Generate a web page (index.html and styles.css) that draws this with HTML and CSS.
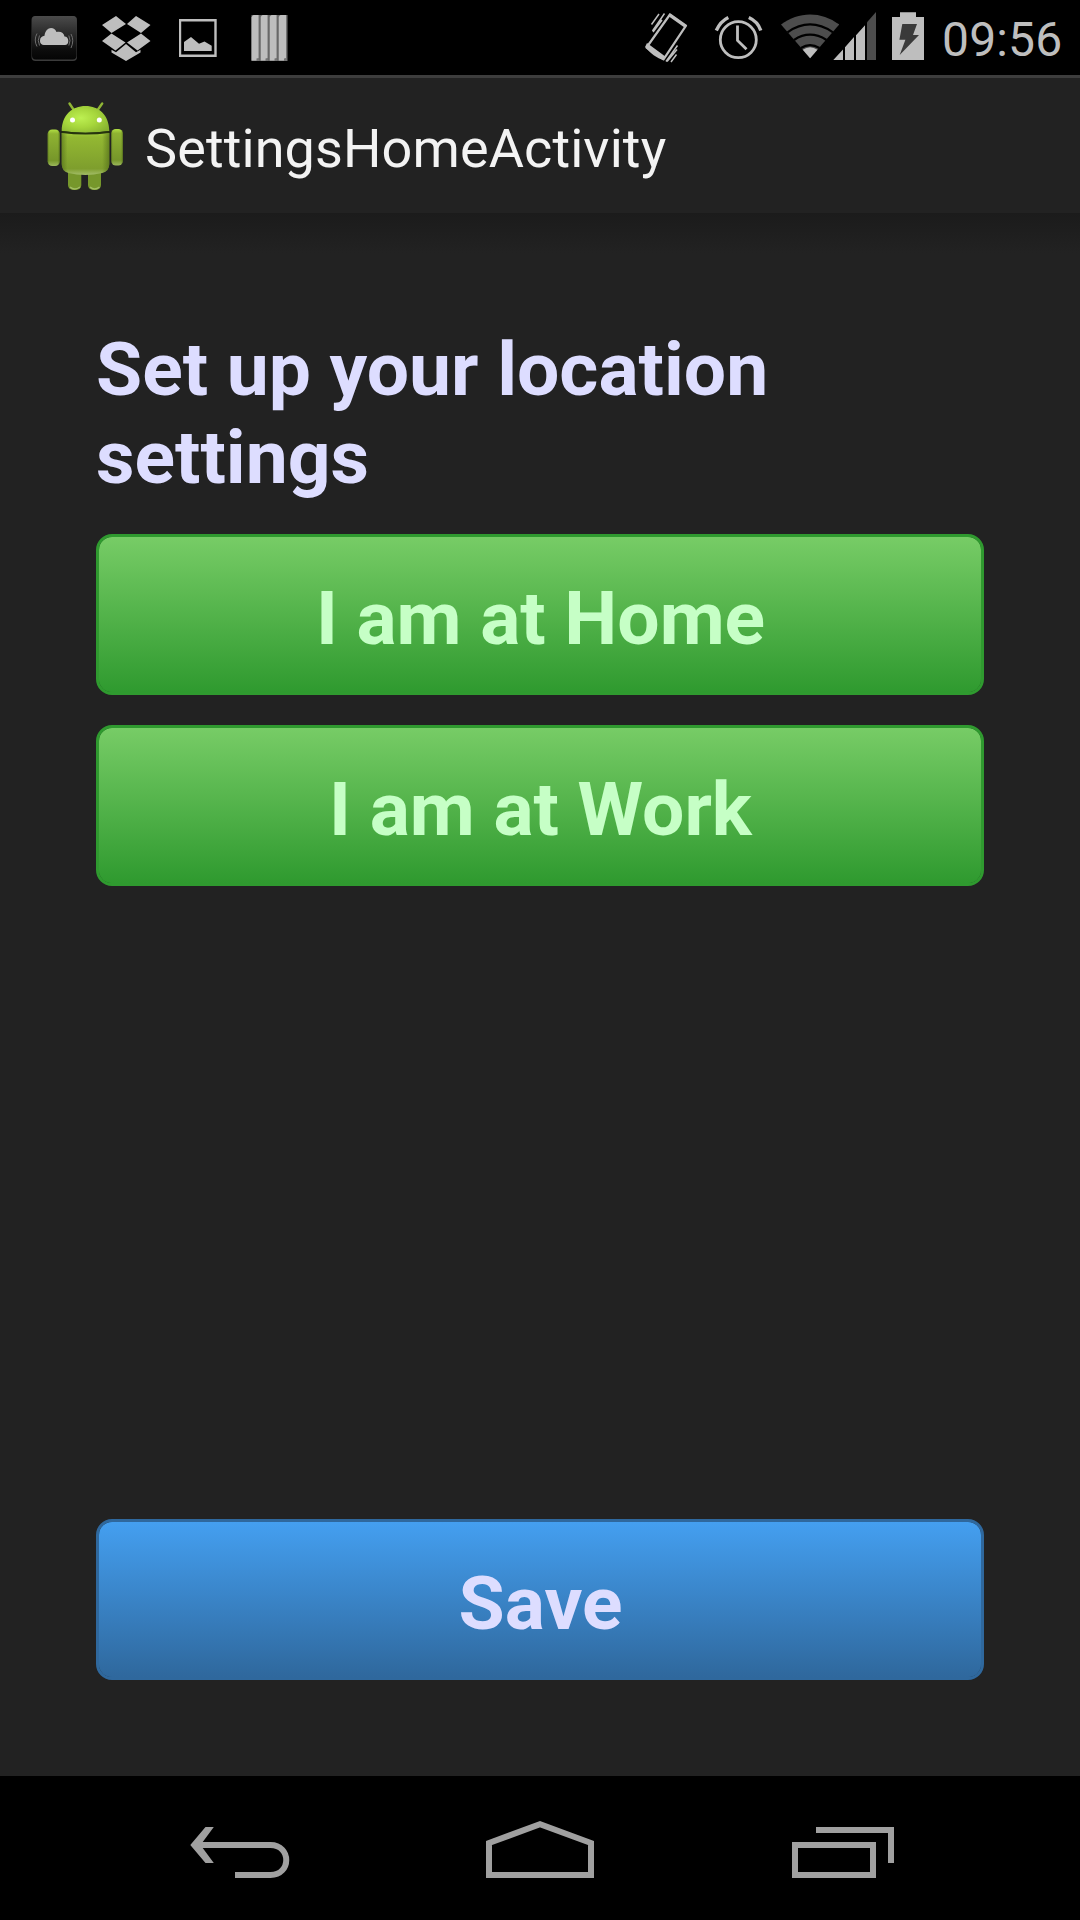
FILE: index.html
```html
<!DOCTYPE html>
<html lang="en">
<head>
<meta charset="utf-8">
<title>SettingsHomeActivity</title>
<link rel="stylesheet" href="styles.css">
</head>
<body>
<div class="screen">
  <div class="status-bar">
    <div class="notifications">
      <svg width="48" height="75" viewBox="30 0 48 75">
        <defs>
          <linearGradient id="tile" x1="0" y1="0" x2="0" y2="1"><stop offset="0" stop-color="#4b4b4b"/><stop offset=".5" stop-color="#222"/><stop offset=".8" stop-color="#0c0c0c"/><stop offset="1" stop-color="#050505"/></linearGradient>
        </defs>
        <rect x="31.5" y="16" width="45.5" height="45" rx="4" fill="#3b3b3b"/>
        <rect x="32" y="16" width="44.500" height="43.500" rx="4" fill="url(#tile)"/>
        <path d="M44 45a4 4 0 0 1-4-4.500c0-3 2-4.500 4.500-4.800C45 31 48 28 51 28c2.500 0 4.500 1.500 5.500 4 4-1.200 7.500.8 8 4.500 2.500 0 3.800 2 3.800 4.500 0 2.500-1.300 4-3.300 4z" fill="#bebebe"/>
        <g fill="none" stroke="#6e6e6e" stroke-width="1"><path d="M39.500 35.500q-2.500 5 0 10M37 33.500q-3.500 6.500 0 13M68.800 35.500q2.500 5 0 10M71 34q3.500 6.500 0 14"/></g>
      </svg>
      <svg width="50" height="75" viewBox="101 0 50 75" fill="#bebebe">
        <path d="M116 16l10 8-14.500 9-9.500-8zM136 16l14.500 9-9.500 8-14-9zM111.500 33.500l14 9-10 8L102 41zM141 33.500l9.500 7.500-13 9.500-10.500-8z"/>
        <path d="M126 44l10 8.200 4.500-2.500v2.800L126 61l-14.500-8.500v-2.800l4.500 2.500z"/>
      </svg>
      <svg width="38" height="75" viewBox="179 0 38 75">
        <path d="M180 20.200h35.500v35.600H180z" fill="none" stroke="#bebebe" stroke-width="2.400"/>
        <path d="M184 51v-9l7-5 8 6.800 5.500-2.300 7.200 4.200V51z" fill="#bebebe"/>
      </svg>
      <svg width="37" height="75" viewBox="251.500 0 37 75">
        <path d="M252 15h36v46h-36z" fill="#747474"/>
        <path d="M252 17l2-2h5v43l-2 .5v2h-5zM261 17l2-2h5v43l-2 .5v2h-5zM270 17l2-2h5v43l-2 .5v2h-5zM279 17l2-2h5.500v43l-2 .5v2H279z" fill="#bebebe"/>
        <path d="M260.500 15v46M269.500 15v46M278.500 15v46" stroke="#555" stroke-width=".8"/>
      </svg>
    </div>
    <div class="system-icons">
      <svg width="44" height="75" viewBox="644 0 44 75">
        <path d="M670 14.500l16 11.200-22.500 33.600-17-11.800z" fill="none" stroke="#bebebe" stroke-width="2.200" stroke-linejoin="round"/>
        <path d="M669.500 13.200l17 12.200-1.300 2.600-17-12zM647 43l18 13.300-1.500 3.700c-6-1.500-14-7-18.300-13.300z" fill="#bebebe"/>
        <path d="M659 14l-7.500 10.500M664.500 13.500l-12 17.500M677.500 45.500L666 61.500M677 49.500l-10 12M676.500 54.500l-5.500 7.500M662 20l-9 12" stroke="#bebebe" stroke-width="1.500"/>
      </svg>
      <svg class="alarm" width="50" height="75" viewBox="713 0 50 75" fill="none" stroke="#bebebe" stroke-width="2.800">
        <circle cx="738.300" cy="39.700" r="18"/>
        <path d="M737.500 25.500V40.500l9 8.700"/>
        <path d="M716.300 30.500q4-9 12-13M748.800 17.500q9 4 12 13" stroke-width="3.400"/>
      </svg>
      <svg class="wifi" width="58" height="75" viewBox="780.500 0 58 75">
        <path d="M780.500 24.500C798 11 821 11 838.700 24.500L809.600 58.300z" fill="#4d4d4d"/>
        <path d="M787 32.300c15-10.500 30-10.500 45.500 0M793.500 40c10.500-7 21.500-7 32.500 0M800.500 48c6-4 12-4 18.500 0" fill="none" stroke="#000" stroke-width="2.200"/>
        <path d="M802.300 49.800q7.300-5 14.600 0l-7.300 8.500z" fill="#bebebe"/>
      </svg>
      <svg width="43" height="75" viewBox="833 0 43 75">
        <path d="M833.300 60l9.700-10.500V60zM845 60V47.300l9-10.300v23zM856 60V35.200l9-10V60z" fill="#bebebe"/>
        <path d="M867 60V22.300l9-10.300v48z" fill="#4d4d4d"/>
      </svg>
      <svg class="battery" width="32" height="75" viewBox="892 0 32 75">
        <path d="M900 12.300h16v4.700h8v43h-32V17h8z" fill="#bebebe"/>
        <path d="M902.300 24h14.700l-4 11h6l-19.300 20 5.700-15.300h-6z" fill="#3a3a3a"/>
      </svg>
      <span class="clock">09:56</span>
    </div>
  </div>

  <header class="action-bar">
    <svg width="78" height="92" viewBox="46 100 78 92">
      <defs>
        <radialGradient id="head" cx=".4" cy=".45" r=".7"><stop offset="0" stop-color="#bdf052"/><stop offset=".5" stop-color="#a6d63c"/><stop offset="1" stop-color="#86b030"/></radialGradient>
        <linearGradient id="body" x1="0" y1="0" x2="0" y2="1"><stop offset="0" stop-color="#a2ce38"/><stop offset=".1" stop-color="#93b832"/><stop offset=".85" stop-color="#7e9e2d"/><stop offset="1" stop-color="#a3bd68"/></linearGradient>
        <linearGradient id="edge"><stop offset="0" stop-color="#506b18" stop-opacity=".6"/><stop offset=".12" stop-color="#506b18" stop-opacity="0"/><stop offset=".85" stop-color="#506b18" stop-opacity="0"/><stop offset="1" stop-color="#506b18" stop-opacity=".65"/></linearGradient>
        <linearGradient id="limb" x1="0" y1="0" x2="0" y2="1"><stop offset="0" stop-color="#b1df43"/><stop offset=".12" stop-color="#8fb332"/><stop offset=".85" stop-color="#76962a"/><stop offset="1" stop-color="#9cb85c"/></linearGradient>
      </defs>
      <path d="M69.500 103.500l4.300 6.500M102.200 103.500L98 109.500" stroke="#8fb535" stroke-width="2.400" stroke-linecap="round"/>
      <rect x="68" y="167" width="13.300" height="23" rx="5" fill="#76972b"/>
      <rect x="88" y="167" width="13" height="23" rx="5" fill="#76972b"/>
      <path d="M70 187q4.500 4 10 0M90 187q4.500 4 9.500 0" fill="none" stroke="#a2bd66" stroke-width="1.500"/>
      <path d="M61.700 131C62 115 72 106 85.500 106S109 115 109.300 131q-24 3.500-47.600 0z" fill="url(#head)"/>
      <path d="M61.700 131q23.800 3.500 47.600 0v2q-23.800 3-47.600 0z" fill="#26350c"/>
      <path d="M61.700 133q23.800 3 47.600 0v31q0 7-7 9-17 4-34 0-6.600-2-6.600-9z" fill="url(#body)"/>
      <path d="M61.700 133q23.800 3 47.600 0v31q0 7-7 9-17 4-34 0-6.600-2-6.600-9z" fill="url(#edge)"/>
      <rect x="47.700" y="129.500" width="12" height="36.500" rx="4.500" fill="url(#limb)"/><rect x="47.700" y="129.500" width="12" height="36.500" rx="4.500" fill="url(#edge)"/>
      <rect x="111.300" y="129" width="11.500" height="36.500" rx="4.500" fill="url(#limb)"/><rect x="111.300" y="129" width="11.500" height="36.500" rx="4.500" fill="url(#edge)"/>
      <circle cx="72.500" cy="120" r="2.500" fill="#fff"/><circle cx="99.300" cy="120" r="2.500" fill="#fff"/>
    </svg>
    <h1 class="title">SettingsHomeActivity</h1>
  </header>

  <main class="content">
    <h2 class="heading">Set up your location settings</h2>
    <button class="btn green">I am at Home</button>
    <button class="btn green">I am at Work</button>
    <button class="btn blue">Save</button>
  </main>

  <nav class="nav-bar">
    <svg width="100" height="60" viewBox="190 1818 100 60" fill="none" stroke="#a0a0a0" stroke-width="6">
      <path d="M195 1845H270.500c21 0 21 30 0 30H235"/>
      <path d="M205.500 1827h8.300L200.500 1845l13.300 18h-8.300L190.300 1845z" fill="#a0a0a0" stroke="none"/>
    </svg>
    <svg width="108" height="60" viewBox="486 1818 108 60" fill="none" stroke="#a0a0a0" stroke-width="6">
      <path d="M489 1843l51-18.800 51 18.800v32H489z"/>
    </svg>
    <svg width="104" height="60" viewBox="790 1818 104 60" fill="none" stroke="#a0a0a0" stroke-width="6">
      <path d="M795 1845h78v30h-78zM816 1830h75v33"/>
    </svg>
  </nav>
</div>
</body>
</html>
```
FILE: styles.css
```css
* { box-sizing: border-box; }

body {
  margin: 0;
  background: #222;
  font-family: Roboto, sans-serif;
}

svg { display: block; flex: none; }

.screen {
  display: flex;
  flex-direction: column;
  width: 1080px;
  height: 1920px;
  overflow: hidden;
}

.status-bar {
  display: flex;
  justify-content: space-between;
  flex: none;
  height: 75px;
  padding: 0 18px 0 30px;
  background: #000;
}

.notifications { display: flex; }
.notifications svg:nth-child(2) { margin-left: 22.5px; }
.notifications svg:nth-child(3) { margin-left: 28px; }
.notifications svg:nth-child(4) { margin-left: 34.5px; }

.system-icons { display: flex; width: 418px; }
.alarm { margin-left: 25px; }
.wifi { margin-left: 17.5px; margin-right: -5.5px; }
.battery { margin-left: 16px; }

.clock {
  margin-left: 18px;
  color: #bebebe;
  font-size: 48px;
  line-height: 79px;
  letter-spacing: 0.15px;
  white-space: nowrap;
}

.action-bar {
  display: flex;
  align-items: center;
  flex: none;
  height: 138px;
  padding: 1px 46px 0;
  border-top: 3px solid #3d3d3d;
}

.title {
  margin: 0 0 0 21px;
  padding-top: 5px;
  color: #f3f3f3;
  font-size: 54px;
  font-weight: 400;
  letter-spacing: 0.1px;
  white-space: nowrap;
}

.content {
  display: flex;
  flex-direction: column;
  flex: 1;
  padding: 112px 96px 96px;
  background: linear-gradient(#1b1b1b, #222 40px);
}

.heading {
  margin: 0 0 33px;
  color: #ddf;
  font-size: 75px;
  line-height: 88px;
}

.btn {
  flex: none;
  height: 161px;
  padding: 6px 0 0 1px;
  border: 3px solid;
  border-radius: 16px;
  background-clip: padding-box;
  font: 700 75px/88px Roboto, sans-serif;
}

.green {
  margin-bottom: 30px;
  border-color: #2f9a2f;
  background-color: #2f9a2f;
  background-image: linear-gradient(#7c6, #2f9a2f);
  color: #c6ffc6;
}

.blue {
  margin-top: auto;
  border-color: #2f689d;
  background-color: #2f689d;
  background-image: linear-gradient(#449ff0, #2f689d);
  color: #ddf;
}

.nav-bar {
  display: flex;
  justify-content: space-between;
  flex: none;
  height: 144px;
  padding: 42px 186px 0 190px;
  background: #000;
}
```
